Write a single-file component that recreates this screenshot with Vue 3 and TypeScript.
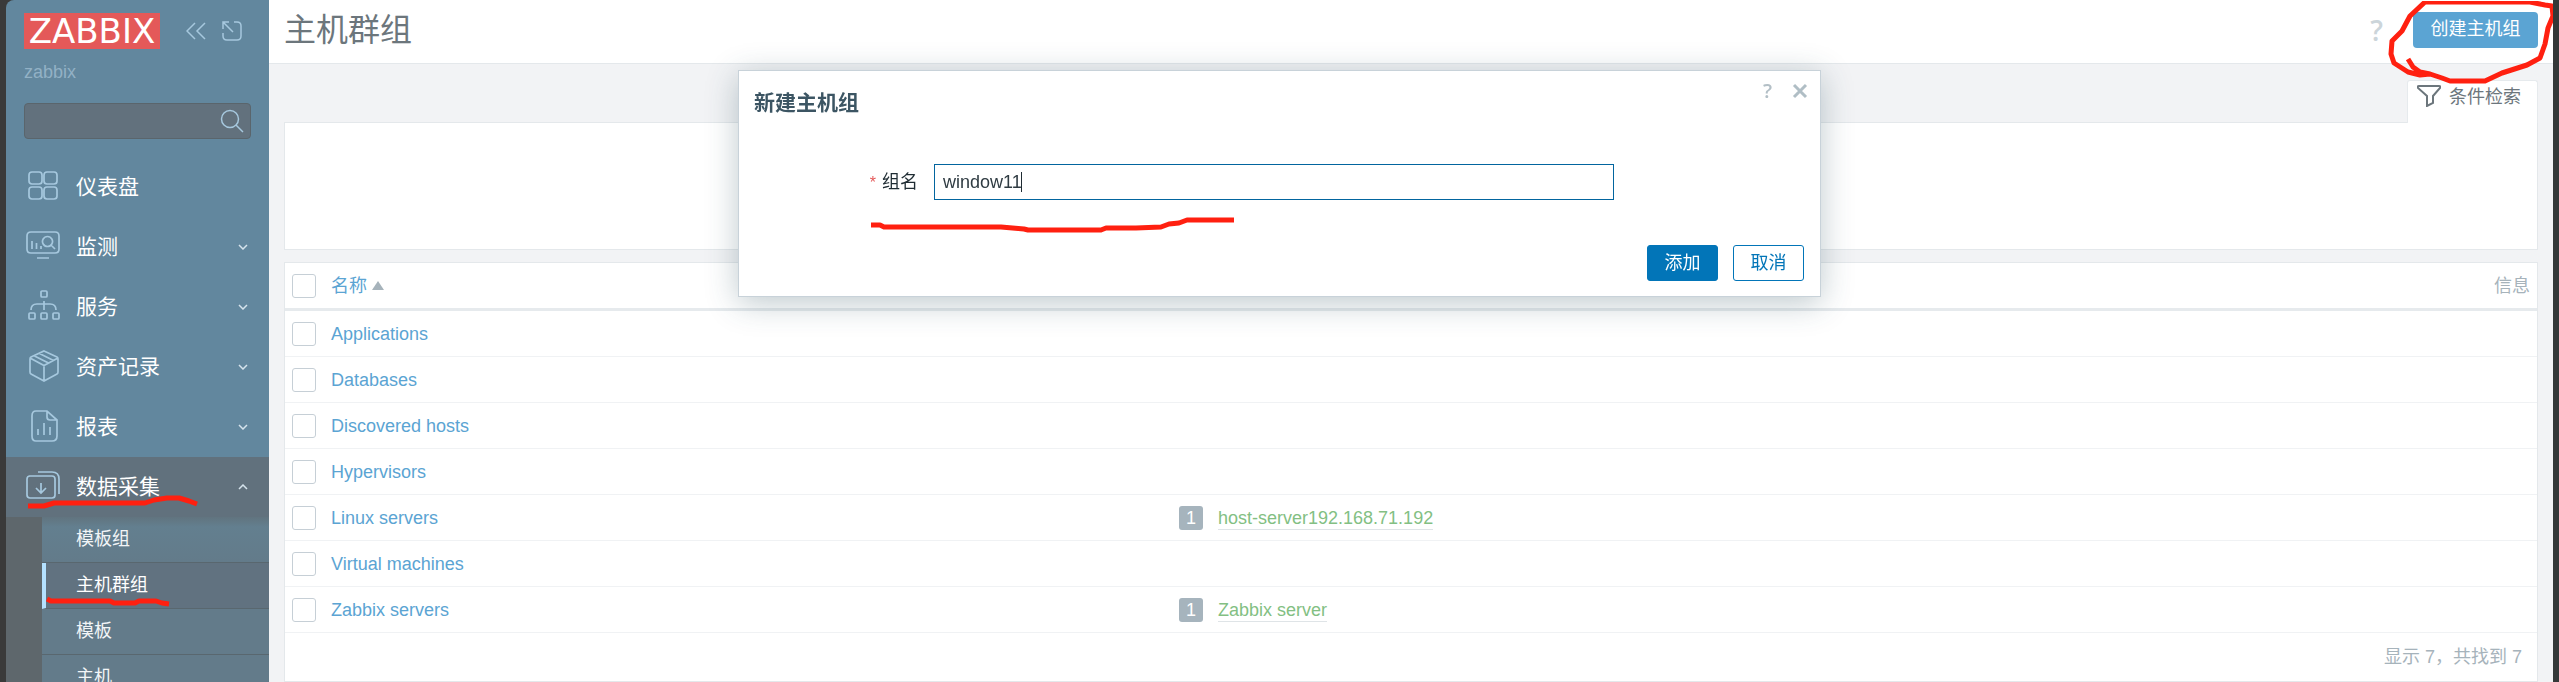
<script setup lang="ts">
import { ref } from 'vue'

interface MenuItem {
  label: string
  icon: string
  expandable: boolean
}

interface HostGroup {
  name: string
  hosts: string[]
}

const menu: MenuItem[] = [
  {
    label: '仪表盘',
    expandable: false,
    icon: 'M8 3h7q3 0 3 3v6q0 3-3 3h-7q-3 0-3-3v-6q0-3 3-3z M23 3h7q3 0 3 3v6q0 3-3 3h-7q-3 0-3-3v-6q0-3 3-3z M8 18h7q3 0 3 3v6q0 3-3 3h-7q-3 0-3-3v-6q0-3 3-3z M23 18h7q3 0 3 3v6q0 3-3 3h-7q-3 0-3-3v-6q0-3 3-3z',
  },
  {
    label: '监测',
    expandable: true,
    icon: 'M7 3h24q4 0 4 4v13q0 4-4 4h-24q-4 0-4-4v-13q0-4 4-4z M13 29h12 M8 12v8 M12.500 14v6 M17 17v3 M23.500 7.500a5 5 0 1 0 .01 0z M27 16l4 4',
  },
  {
    label: '服务',
    expandable: true,
    icon: 'M18 2h4q1 0 1 1v4q0 1-1 1h-4q-1 0-1-1v-4q0-1 1-1z M20 12v9 M7 21q0-6 6-6h13q6 0 6 6 M6 24h4q1 0 1 1v4q0 1-1 1h-4q-1 0-1-1v-4q0-1 1-1z M18 24h4q1 0 1 1v4q0 1-1 1h-4q-1 0-1-1v-4q0-1 1-1z M30 24h4q1 0 1 1v4q0 1-1 1h-4q-1 0-1-1v-4q0-1 1-1z',
  },
  {
    label: '资产记录',
    expandable: true,
    icon: 'M20 2l13 6q1 .5 1 2v13q0 1.500-1 2l-13 7l-13-7q-1-.5-1-2v-13q0-1.500 1-2z M6 9l14 7.500l14-7.500 M20 16.500v15 M10.500 7l14 7 M15.500 4.500l14 7',
  },
  {
    label: '报表',
    expandable: true,
    icon: 'M12 2h11l10 9v16q0 5-5 5h-16q-4 0-4-5v-20q0-5 4-5z M23 2v6q0 3 3 3h7 M14 20v6 M20 14v12 M26 18v8',
  },
]

const collectionIcon =
  'M5 7h23q3 0 3 3v16q0 3-3 3h-22q-3 0-3-3v-16q0-3 3-3z M14 3h14q7 0 7 7v15 M17 14v9 M12 19l5 5l5-5'

const submenu = ['模板组', '主机群组', '模板', '主机']
const activeSubmenu = '主机群组'

const groups: HostGroup[] = [
  { name: 'Applications', hosts: [] },
  { name: 'Databases', hosts: [] },
  { name: 'Discovered hosts', hosts: [] },
  { name: 'Hypervisors', hosts: [] },
  { name: 'Linux servers', hosts: ['host-server192.168.71.192'] },
  { name: 'Virtual machines', hosts: [] },
  { name: 'Zabbix servers', hosts: ['Zabbix server'] },
]

const search = ref('')
const groupName = ref('window11')
</script>

<template>
  <div class="shell">
    <aside class="sidebar">
      <div class="brand">
        <a class="logo" href="#">ZABBIX</a>
        <button class="icon-button collapse" type="button" aria-label="收起">
          <svg width="20" height="18" viewBox="0 0 20 18"><path d="M9 1L1 9l8 8M19 1l-8 8l8 8" /></svg>
        </button>
        <button class="icon-button" type="button" aria-label="隐藏">
          <svg width="20" height="20" viewBox="0 0 20 20"><path d="M7 1H1v7M1 1l10 10M12 1h3q4 0 4 4v10q0 4-4 4H5q-4 0-4-4v-3" /></svg>
        </button>
      </div>
      <div class="server-name">zabbix</div>
      <form class="search" @submit.prevent>
        <input v-model="search" type="text" aria-label="搜索" />
        <button class="icon-button" type="submit" aria-label="搜索">
          <svg width="24" height="24" viewBox="0 0 24 24"><circle cx="10" cy="10" r="8.500" /><path d="M16 16l7 7" /></svg>
        </button>
      </form>
      <nav>
        <a v-for="item in menu" :key="item.label" class="menu-item" href="#">
          <svg class="menu-icon" width="36" height="36" viewBox="0 0 36 36"><path :d="item.icon" /></svg>
          <span>{{ item.label }}</span>
          <svg v-if="item.expandable" class="chevron" width="10" height="6" viewBox="0 0 10 6"><path d="M1 1l4 4l4-4" /></svg>
        </a>
        <a class="menu-item open" href="#">
          <svg class="menu-icon" width="36" height="36" viewBox="0 0 36 36"><path :d="collectionIcon" /></svg>
          <span>数据采集</span>
          <svg class="chevron" width="10" height="6" viewBox="0 0 10 6"><path d="M1 5l4-4l4 4" /></svg>
          <svg class="mark" width="200" height="60" viewBox="0 0 200 60"><path d="M22 49h16l10-3h91l9-3l13-2h12l10 3l8 3" /></svg>
        </a>
        <div class="submenu">
          <a v-for="label in submenu" :key="label" href="#" :class="{ selected: label === activeSubmenu }">
            {{ label }}
            <svg v-if="label === activeSubmenu" class="mark" width="140" height="50" viewBox="0 0 140 50"><path d="M5 36l4 2h59l4 2h21l4-2h17l6 2l7 1" /></svg>
          </a>
        </div>
      </nav>
    </aside>

    <main class="page">
      <header class="page-header">
        <h1>主机群组</h1>
        <a class="help" href="#" aria-label="帮助">?</a>
        <div class="create-wrap">
          <button class="create" type="button">创建主机组</button>
          <svg class="mark circle" width="175" height="90" viewBox="0 0 175 90">
            <path d="M24 58L29 66L36 71L46 73L58 77L66 80H101L118 72L143 64L156 57L161 43L164 27L169 15L168 5L161 4L146 1H41L26 15L18 30L8 40L7 53L10 62L24 71L36 74L46 73" />
          </svg>
        </div>
      </header>

      <div class="content">
        <div class="filter-tabs">
          <button class="filter-tab" type="button">
            <svg width="24" height="22" viewBox="0 0 24 22"><path d="M2 1h20q2 0 1 2l-7 8v7l-6 3V11L1 3Q0 1 2 1z" /></svg>
            <span>条件检索</span>
          </button>
        </div>
        <section class="filter-panel"></section>

        <table class="groups">
          <colgroup>
            <col class="col-check" />
            <col class="col-name" />
            <col class="col-count" />
            <col />
            <col class="col-info" />
          </colgroup>
          <thead>
            <tr>
              <th><input type="checkbox" aria-label="全选" /></th>
              <th><a class="sort" href="#">名称<i class="sort-arrow"></i></a></th>
              <th></th>
              <th></th>
              <th class="info">信息</th>
            </tr>
          </thead>
          <tbody>
            <tr v-for="group in groups" :key="group.name">
              <td><input type="checkbox" :aria-label="group.name" /></td>
              <td><a class="group-link" href="#">{{ group.name }}</a></td>
              <td><span v-if="group.hosts.length" class="count">{{ group.hosts.length }}</span></td>
              <td><a v-for="host in group.hosts" :key="host" class="host-link" href="#">{{ host }}</a></td>
              <td></td>
            </tr>
          </tbody>
        </table>
        <div class="table-footer">显示 7，共找到 7</div>
      </div>
    </main>

    <div class="dialog" role="dialog" aria-labelledby="dialog-title">
      <div class="dialog-header">
        <h2 id="dialog-title">新建主机组</h2>
        <a class="dialog-help" href="#" aria-label="帮助">?</a>
        <button class="dialog-close" type="button" aria-label="关闭">
          <svg width="16" height="16" viewBox="0 0 16 16"><path d="M2 2l12 12M14 2L2 14" /></svg>
        </button>
      </div>
      <form @submit.prevent>
        <div class="field">
          <label for="group-name"><span class="required">*</span>组名</label>
          <div class="text-wrap">
            <input id="group-name" v-model="groupName" type="text" />
            <i class="caret"></i>
          </div>
        </div>
        <div class="dialog-footer">
          <button class="primary" type="submit">添加</button>
          <button type="button">取消</button>
        </div>
      </form>
      <svg class="mark" width="520" height="180" viewBox="0 0 520 180">
        <path d="M132 154h9l4 2h117l23 2l4 1h73l5-2h30l25-1l8-3l10-1l8-3h47" />
      </svg>
    </div>
  </div>
</template>

<style>
body {
  margin: 0;
}
</style>

<style scoped>
* {
  box-sizing: border-box;
}

.shell {
  display: flex;
  height: 100vh;
  overflow: hidden;
  background: #3a3a3a;
  border-left: 6px solid #3a3a3a;
  border-right: 6px solid #343838;
  font: 18px/24px "Liberation Sans", "Noto Sans CJK SC", sans-serif;
  color: #1f2c33;
}

a {
  color: inherit;
  text-decoration: none;
}

button,
input {
  font: inherit;
  margin: 0;
}

svg {
  display: block;
  flex: none;
  fill: none;
  stroke: currentColor;
  stroke-width: 2;
}

.mark {
  position: absolute;
  left: 0;
  top: 0;
  pointer-events: none;
  color: #ff2010;
  stroke-width: 5;
  stroke-linejoin: round;
}

.icon-button {
  display: block;
  padding: 0;
  border: 0;
  background: none;
  color: #a6c8de;
}

.icon-button svg {
  stroke-width: 1.5;
}

/* Sidebar */
.sidebar {
  flex: none;
  width: 263px;
  background: #62879e;
  border-top-left-radius: 8px;
}

.brand {
  display: flex;
  align-items: center;
  margin: 13px 27px 0 18px;
  height: 36px;
}

.logo {
  width: 137px;
  height: 36px;
  background: #e45959;
  color: #fff;
  font: 34px/37px "DejaVu Sans", sans-serif;
  text-align: center;
}

.collapse {
  margin: 0 16px 0 26px;
}

.server-name {
  margin: 11px 18px 19px;
  color: #92b1c5;
}

.search {
  display: flex;
  align-items: center;
  height: 36px;
  margin: 0 18px 18px;
  padding-right: 6px;
  background: #62717d;
  border: 1px solid #5a656c;
  border-radius: 4px;
}

.search input {
  flex: 1;
  min-width: 0;
  border: 0;
  outline: 0;
  background: none;
  color: #fff;
}

.menu-item {
  position: relative;
  display: flex;
  align-items: center;
  height: 60px;
  padding: 0 21px 0 18px;
  color: #fff;
  font-size: 21px;
}

.menu-icon {
  margin-right: 16px;
  color: #a6c8de;
  stroke-width: 1.7;
}

.chevron {
  margin-left: auto;
  color: #d5e3ec;
  stroke-width: 1.5;
}

.open {
  background: #61717d;
}

.submenu {
  border-left: 36px solid #5e676c;
  background: #637b8a;
}

.submenu a {
  position: relative;
  display: block;
  height: 46px;
  padding: 10px 34px;
  border-bottom: 1px solid #59676f;
  color: #f2f5f7;
}

.submenu a:first-child {
  background: linear-gradient(#61747f, #637f8f 10px, #637b8a);
}

.submenu .selected {
  padding-left: 30px;
  border-left: 4px solid #b4e1ff;
  background: #617280;
  color: #fff;
}

.submenu .mark {
  left: -4px;
}

/* Page */
.page {
  flex: 1;
  min-width: 0;
  background: #f2f3f5;
}

.page-header {
  display: flex;
  align-items: center;
  height: 64px;
  padding: 0 15px 4px;
  background: #fff;
  border-bottom: 1px solid #e4e8eb;
}

h1 {
  margin: 0 auto 0 0;
  font-size: 32px;
  font-weight: 400;
  line-height: 40px;
  color: #6c767c;
}

.help {
  margin-right: 30px;
  color: #ccd5da;
  font: 28px/36px "Open Sans", "Noto Sans", sans-serif;
  font-weight: 600;
}

.create-wrap {
  position: relative;
}

.create {
  display: block;
  width: 125px;
  height: 36px;
  padding: 0 0 2px;
  border: 0;
  border-radius: 4px;
  background: #5ba4d3;
  color: #fff;
}

.circle {
  left: -29px;
  top: -11px;
}

.content {
  padding: 16px 15px 0;
}

.filter-tabs {
  display: flex;
  justify-content: flex-end;
}

.filter-tab {
  position: relative;
  display: flex;
  gap: 8px;
  width: 131px;
  height: 43px;
  margin-bottom: -1px;
  padding: 4px 0 0 9px;
  border: 1px solid #e6eaed;
  border-bottom: 0;
  border-radius: 3px 3px 0 0;
  background: #fff;
  color: #6c767c;
}

.create-wrap .mark {
  z-index: 1;
}

.filter-panel {
  height: 128px;
  margin-bottom: 12px;
  background: #fff;
  border: 1px solid #e4e8eb;
}

.groups {
  width: 100%;
  table-layout: fixed;
  border-collapse: separate;
  border-spacing: 0;
  background: #fff;
  border: 1px solid #e4e8eb;
  border-bottom: 0;
}

.col-check {
  width: 39px;
}

.col-name {
  width: 848px;
}

.col-count {
  width: 39px;
}

.col-info {
  width: 100px;
}

th,
td {
  height: 46px;
  padding: 0 7px;
  border-bottom: 1px solid #f0f2f4;
  text-align: left;
  font-weight: 400;
  white-space: nowrap;
}

th {
  height: 48px;
  border-bottom: 3px solid #e6eaed;
}

input[type='checkbox'] {
  appearance: none;
  display: block;
  width: 24px;
  height: 24px;
  background: #fff;
  border: 1px solid #c6cfd6;
  border-radius: 3px;
}

.sort {
  display: flex;
  align-items: center;
  gap: 5px;
  color: #5ba4d3;
}

.sort-arrow {
  border: 6px solid transparent;
  border-top: 0;
  border-bottom: 9px solid #a6b3bb;
}

.info {
  text-align: right;
  color: #a6b3bb;
}

.group-link {
  color: #5ba4d3;
}

.count {
  display: block;
  width: 24px;
  height: 24px;
  border-radius: 3px;
  background: #a6b4bd;
  color: #fff;
  line-height: 24px;
  text-align: center;
}

.host-link {
  display: inline-block;
  line-height: 22px;
  border-bottom: 1px solid #dfe4e7;
  color: #83bf83;
}

.table-footer {
  height: 49px;
  padding: 12px 15px;
  background: #fff;
  border: 1px solid #e4e8eb;
  border-top: 0;
  text-align: right;
  color: #a6b3bb;
}

/* Dialog */
.dialog {
  position: fixed;
  top: 70px;
  left: 0;
  right: 0;
  width: 1083px;
  max-width: 100%;
  margin: 0 auto;
  padding: 0 16px 15px 15px;
  background: #fff;
  border: 1px solid #c8d2d9;
  box-shadow: 0 6px 30px rgba(40, 75, 90, 0.3);
}

.dialog-header {
  display: flex;
  align-items: flex-start;
  height: 93px;
}

h2 {
  margin: 18px auto 0 0;
  color: #3c5563;
  font-size: 21px;
  line-height: 28px;
}

.dialog-help {
  margin-right: 20px;
  color: #b3bfc6;
  font: 20px/40px "Open Sans", "Noto Sans", sans-serif;
  font-weight: 600;
}

.dialog-close {
  padding: 12px 0;
  margin-right: -4px;
  border: 0;
  background: none;
  color: #b0bec5;
}

.dialog-close svg {
  stroke-width: 3;
}

.field {
  display: grid;
  grid-template-columns: 164px 680px;
  gap: 16px;
  align-items: center;
}

label {
  text-align: right;
}

.required {
  margin-right: 6px;
  color: #e45959;
  font-size: 16px;
}

.text-wrap {
  position: relative;
}

.text-wrap input {
  display: block;
  width: 100%;
  height: 36px;
  padding: 0 8px;
  border: 1px solid #02659f;
  outline: 0;
  background: #fff;
  color: #2f3b42;
  caret-color: transparent;
}

.caret {
  position: absolute;
  left: 87px;
  top: 8px;
  width: 1px;
  height: 20px;
  background: #1f2c33;
}

.dialog-footer {
  display: flex;
  justify-content: flex-end;
  gap: 15px;
  margin-top: 45px;
}

.dialog-footer button {
  width: 71px;
  height: 36px;
  padding: 0;
  border: 1px solid #0275b8;
  border-radius: 3px;
  background: #fff;
  color: #0275b8;
}

.dialog-footer .primary {
  background: #0275b8;
  color: #fff;
}
</style>
